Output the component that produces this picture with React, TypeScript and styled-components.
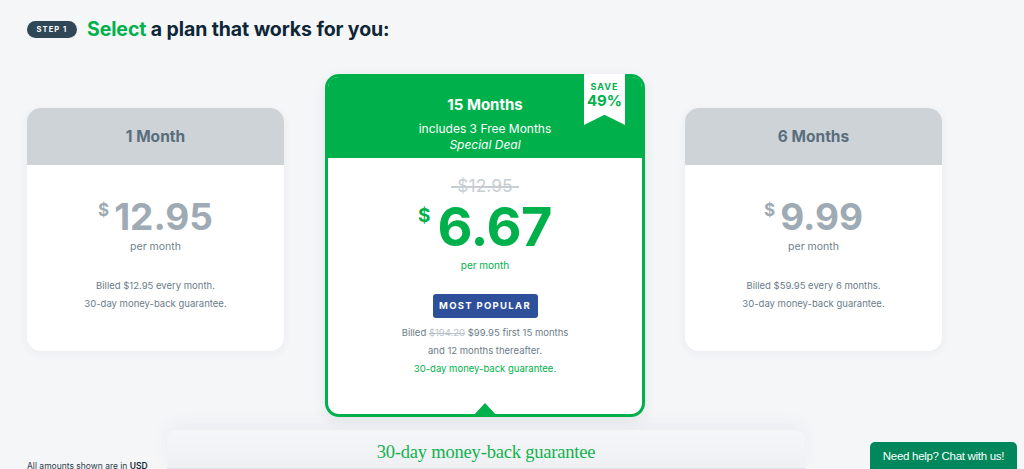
import styled, { createGlobalStyle } from "styled-components";

const GlobalStyle = createGlobalStyle`
  html, body {
    margin: 0;
    padding: 0;
    background: #f5f6f8;
    font-family: Inter, "Noto Sans", sans-serif;
    overflow: hidden;
  }
`;

const GREEN = "#00b14b";

const Page = styled.div`
  width: 1024px;
  height: 469px;
  padding: 17px 0 0 27px;
  box-sizing: border-box;
  position: relative;
  overflow: hidden;
`;

const StepRow = styled.div`
  display: flex;
  align-items: center;
  gap: 10px;
`;

const StepBadge = styled.span`
  display: inline-flex;
  align-items: center;
  justify-content: center;
  height: 17px;
  width: 50px;
  border-radius: 9px;
  background: #2f4757;
  color: #fff;
  font-size: 7.5px;
  font-weight: 700;
  letter-spacing: 1.1px;
`;

const Heading = styled.h1`
  margin: 0;
  font-size: 19.5px;
  font-weight: 700;
  color: #0f2637;
  letter-spacing: -0.1px;
  span {
    color: ${GREEN};
  }
`;

const Plans = styled.div`
  display: flex;
  align-items: flex-start;
  gap: 41px;
  margin-top: 33px;
`;

const SideCard = styled.div`
  width: 257px;
  margin-top: 34px;
  height: 243px;
  background: #fff;
  border-radius: 14px;
  overflow: hidden;
  box-shadow: 0 2px 10px rgba(30, 50, 70, 0.06);
  display: flex;
  flex-direction: column;
  align-items: center;
  &:last-child {
    margin-left: -1px;
  }
`;

const SideHeader = styled.div`
  align-self: stretch;
  height: 57px;
  background: #cdd3d7;
  display: flex;
  align-items: center;
  justify-content: center;
  font-size: 15.5px;
  font-weight: 700;
  color: #5a6d7b;
`;

const PriceRow = styled.div<{ $big?: boolean }>`
  display: flex;
  align-items: flex-start;
  color: ${(p) => (p.$big ? GREEN : "#9eabb4")};
  margin-top: ${(p) => (p.$big ? "5px" : "33px")};
  line-height: 1;
`;

const Dollar = styled.span<{ $big?: boolean }>`
  font-size: ${(p) => (p.$big ? "19px" : "17px")};
  font-weight: 700;
  margin-top: ${(p) => (p.$big ? "6px" : "4px")};
  margin-right: ${(p) => (p.$big ? "7px" : "5px")};
`;

const Amount = styled.span<{ $big?: boolean }>`
  font-size: ${(p) => (p.$big ? "54px" : "37px")};
  font-weight: 700;
  letter-spacing: ${(p) => (p.$big ? "-0.5px" : "0")};
`;

const PerMonth = styled.div<{ $green?: boolean }>`
  font-size: ${(p) => (p.$green ? "10px" : "10.5px")};
  color: ${(p) => (p.$green ? GREEN : "#6f7f8b")};
  margin-top: ${(p) => (p.$green ? "5px" : "5px")};
`;

const Notes = styled.div<{ $top: number }>`
  margin-top: ${(p) => p.$top}px;
  font-size: 9.5px;
  line-height: 18px;
  color: #6b7c89;
  text-align: center;
`;

const GreenNote = styled.div`
  color: ${GREEN};
`;

const Struck = styled.span`
  color: #b9c2c9;
  text-decoration: line-through;
`;

const MainCard = styled.div`
  position: relative;
  width: 320px;
  height: 343px;
  box-sizing: border-box;
  border: 3px solid ${GREEN};
  border-radius: 14px;
  background: #fff;
  display: flex;
  flex-direction: column;
  align-items: center;
  box-shadow: 0 4px 14px rgba(30, 50, 70, 0.08);
`;

const MainHeader = styled.div`
  align-self: stretch;
  height: 81px;
  background: ${GREEN};
  border-radius: 10px 10px 0 0;
  color: #fff;
  display: flex;
  flex-direction: column;
  align-items: center;
  padding-top: 18px;
  box-sizing: border-box;
`;

const MainTitle = styled.div`
  font-size: 15px;
  font-weight: 700;
`;

const MainSub = styled.div<{ $italic?: boolean }>`
  font-size: 12px;
  font-style: ${(p) => (p.$italic ? "italic" : "normal")};
  margin-top: ${(p) => (p.$italic ? "1px" : "7px")};
`;

const OldPrice = styled.div`
  position: relative;
  margin-top: 19px;
  font-size: 17.5px;
  line-height: 1;
  color: #c7ced3;
  padding: 0 4px;
  &::after {
    content: "";
    position: absolute;
    left: -2px;
    right: -2px;
    top: 52%;
    height: 1.5px;
    background: #c7ced3;
  }
`;

const PopularBadge = styled.div`
  margin-top: 23px;
  width: 105px;
  height: 24px;
  border-radius: 3px;
  background: #2e4f9a;
  color: #fff;
  font-size: 9.5px;
  font-weight: 700;
  letter-spacing: 1.3px;
  display: flex;
  align-items: center;
  justify-content: center;
`;

const Ribbon = styled.div`
  position: absolute;
  top: -3px;
  right: 17px;
  width: 41px;
  height: 51px;
  background: #fff;
  clip-path: polygon(0 0, 100% 0, 100% 100%, 50% 80%, 0 100%);
  color: ${GREEN};
  display: flex;
  flex-direction: column;
  align-items: center;
  padding-top: 8px;
  box-sizing: border-box;
  line-height: 1;
`;

const RibbonSave = styled.span`
  font-size: 9px;
  font-weight: 700;
  letter-spacing: 1px;
`;

const RibbonPct = styled.span`
  font-size: 15px;
  font-weight: 700;
  margin-top: 2px;
`;

const Pointer = styled.div`
  position: absolute;
  bottom: -3px;
  left: 50%;
  margin-left: -13px;
  width: 26px;
  height: 14px;
  background: ${GREEN};
  clip-path: polygon(50% 0, 100% 100%, 0 100%);
`;

const Footer = styled.div`
  display: flex;
  align-items: flex-end;
  margin-top: 13px;
`;

const Currency = styled.div`
  width: 140px;
  font-size: 8.5px;
  line-height: 1;
  color: #2c3e4c;
  b {
    font-weight: 600;
    color: #16293a;
  }
`;

const GuaranteePanel = styled.div`
  width: 638px;
  height: 40px;
  border-radius: 10px 10px 0 0;
  background: linear-gradient(to bottom, #f5f6f8 0%, #eef0f3 100%);
  box-shadow: 0 -6px 18px rgba(30, 50, 70, 0.05);
  display: flex;
  justify-content: center;
  padding-top: 12px;
  box-sizing: border-box;
  position: relative;
  &::after {
    content: "";
    position: absolute;
    left: 0;
    right: 0;
    bottom: 0;
    height: 2px;
    background: #dfe3e7;
  }
`;

const GuaranteeText = styled.div`
  font-family: "Liberation Serif", "DejaVu Serif", serif;
  font-size: 18.5px;
  color: #12b24f;
  letter-spacing: -0.2px;
`;

const ChatButton = styled.button`
  position: fixed;
  right: 7px;
  bottom: -8px;
  width: 147px;
  height: 35px;
  border: none;
  border-radius: 5px;
  background: #00875b;
  color: #fff;
  font-family: "Liberation Sans", Arial, sans-serif;
  font-size: 11.5px;
  padding: 0 0 8px;
  cursor: pointer;
  letter-spacing: -0.3px;
`;

export default function App() {
  return (
    <>
      <GlobalStyle />
      <Page>
        <StepRow>
          <StepBadge>STEP 1</StepBadge>
          <Heading>
            <span>Select</span> a plan that works for you:
          </Heading>
        </StepRow>

        <Plans>
          <SideCard>
            <SideHeader>1 Month</SideHeader>
            <PriceRow>
              <Dollar>$</Dollar>
              <Amount>12.95</Amount>
            </PriceRow>
            <PerMonth>per month</PerMonth>
            <Notes $top={24}>
              <div>Billed $12.95 every month.</div>
              <div>30-day money-back guarantee.</div>
            </Notes>
          </SideCard>

          <MainCard>
            <MainHeader>
              <MainTitle>15 Months</MainTitle>
              <MainSub>includes 3 Free Months</MainSub>
              <MainSub $italic>Special Deal</MainSub>
            </MainHeader>
            <Ribbon>
              <RibbonSave>SAVE</RibbonSave>
              <RibbonPct>49%</RibbonPct>
            </Ribbon>
            <OldPrice>$12.95</OldPrice>
            <PriceRow $big>
              <Dollar $big>$</Dollar>
              <Amount $big>6.67</Amount>
            </PriceRow>
            <PerMonth $green>per month</PerMonth>
            <PopularBadge>MOST POPULAR</PopularBadge>
            <Notes $top={6}>
              <div>
                Billed <Struck>$194.20</Struck> $99.95 first 15 months
              </div>
              <div>and 12 months thereafter.</div>
              <GreenNote>30-day money-back guarantee.</GreenNote>
            </Notes>
            <Pointer />
          </MainCard>

          <SideCard>
            <SideHeader>6 Months</SideHeader>
            <PriceRow>
              <Dollar>$</Dollar>
              <Amount>9.99</Amount>
            </PriceRow>
            <PerMonth>per month</PerMonth>
            <Notes $top={24}>
              <div>Billed $59.95 every 6 months.</div>
              <div>30-day money-back guarantee.</div>
            </Notes>
          </SideCard>
        </Plans>

        <Footer>
          <Currency>
            All amounts shown are in <b>USD</b>
          </Currency>
          <GuaranteePanel>
            <GuaranteeText>30-day money-back guarantee</GuaranteeText>
          </GuaranteePanel>
        </Footer>
      </Page>
      <ChatButton>Need help? Chat with us!</ChatButton>
    </>
  );
}
